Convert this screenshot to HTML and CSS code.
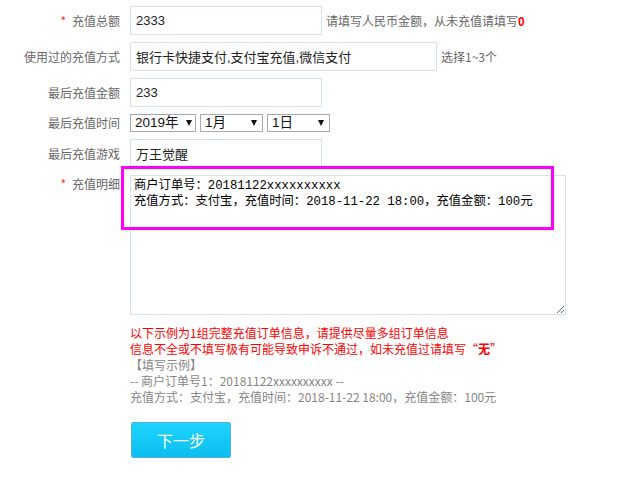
FILE: index.html
```html
<!DOCTYPE html>
<html lang="zh-CN">
<head>
<meta charset="utf-8">
<title>充值信息</title>
<link rel="stylesheet" href="styles.css">
</head>
<body>
<form class="form">
  <div class="row">
    <label class="label"><span class="req">*</span>充值总额</label>
    <input class="field field-short" type="text" value="2333">
    <span class="hint">请填写人民币金额，从未充值请填写<b class="zero">0</b></span>
  </div>
  <div class="row">
    <label class="label">使用过的充值方式</label>
    <input class="field field-long" type="text" value="银行卡快捷支付,支付宝充值,微信支付">
    <span class="hint">选择1~3个</span>
  </div>
  <div class="row">
    <label class="label">最后充值金额</label>
    <input class="field field-short" type="text" value="233">
  </div>
  <div class="row row-select">
    <label class="label">最后充值时间</label>
    <div class="selects">
      <span class="sel sel-year"><select><option>2019年</option></select></span>
      <span class="sel sel-month"><select><option>1月</option></select></span>
      <span class="sel sel-day"><select><option>1日</option></select></span>
    </div>
  </div>
  <div class="row">
    <label class="label">最后充值游戏</label>
    <input class="field field-short" type="text" value="万王觉醒">
  </div>
  <div class="row row-top">
    <label class="label label-top"><span class="req">*</span>充值明细</label>
    <div class="detail">
      <textarea class="area">商户订单号：20181122xxxxxxxxxx
充值方式：支付宝，充值时间：2018-11-22 18:00，充值金额：100元</textarea>
      <div class="notes">
        <p class="warn">以下示例为1组完整充值订单信息，请提供尽量多组订单信息</p>
        <p class="warn">信息不全或不填写极有可能导致申诉不通过，如未充值过请填写“<b>无</b>”</p>
        <p class="eg">【填写示例】</p>
        <p class="eg">-- 商户订单号1：20181122xxxxxxxxxx --</p>
        <p class="eg">充值方式：支付宝，充值时间：2018-11-22 18:00，充值金额：100元</p>
      </div>
      <button class="next" type="button">下一步</button>
    </div>
  </div>
  <div class="highlight"></div>
</form>
</body>
</html>
```

FILE: styles.css
```css
html, body {
  margin: 0;
  padding: 0;
  background: #fff;
}
body {
  font-family: "Noto Sans CJK SC", "Liberation Sans", sans-serif;
  font-size: 12px;
  color: #666;
}
.form {
  position: relative;
  display: flex;
  flex-direction: column;
  gap: 7px;
  padding-top: 6px;
}
.row {
  display: flex;
  align-items: center;
}
.row-top {
  align-items: flex-start;
}
.label {
  width: 120px;
  margin-right: 10px;
  text-align: right;
  font-size: 12px;
  line-height: 16px;
  color: #666;
  flex: none;
}
.label-top {
  padding-top: 1px;
}
.req {
  color: #f33;
  margin-right: 6px;
}
.field {
  box-sizing: border-box;
  height: 29px;
  border: 1px solid #d5e3f0;
  padding: 0 5px;
  font-family: "Liberation Sans", "Noto Sans CJK SC", sans-serif;
  font-size: 13px;
  color: #222;
  outline: none;
  margin: 0;
}
.field-short { width: 192px; }
.field-long { width: 307px; }
.hint {
  margin-left: 4px;
  color: #666;
  font-size: 12px;
}
.zero {
  color: #f00;
  font-family: "Liberation Sans", sans-serif;
  font-weight: bold;
  font-size: 12px;
}
.row-select { height: 18px; }
.selects {
  display: flex;
  gap: 4px;
}
.sel {
  position: relative;
  display: block;
}
.sel select {
  appearance: none;
  -webkit-appearance: none;
  box-sizing: border-box;
  height: 18px;
  border: 1px solid #a9a9a9;
  border-radius: 0;
  background: #fff;
  padding: 0 0 0 4px;
  margin: 0;
  font-family: "Liberation Sans", "Noto Sans CJK SC", sans-serif;
  font-size: 13.5px;
  line-height: 16px;
  color: #111;
  display: block;
}
.sel::after {
  content: "";
  position: absolute;
  right: 6px;
  top: 6px;
  border-left: 3.5px solid transparent;
  border-right: 3.5px solid transparent;
  border-top: 6px solid #111;
  pointer-events: none;
}
.sel-year select { width: 66px; }
.sel-year::after { right: 4px; }
.sel-month select, .sel-day select { width: 63px; }
.detail {
  display: flex;
  flex-direction: column;
  align-items: flex-start;
}
.area {
  box-sizing: border-box;
  width: 436px;
  height: 140px;
  border: 1px solid #d5e3f0;
  padding: 2px 3px;
  margin: 0;
  font-family: "Liberation Mono", "Noto Sans CJK SC", monospace;
  font-size: 12.3px;
  line-height: 16px;
  color: #000;
  outline: none;
  display: block;
}
.notes {
  margin-top: 10px;
}
.notes p {
  margin: 0;
  font-size: 12px;
  line-height: 16px;
}
.warn { color: #f00; }
.warn b { font-weight: bold; }
.eg { color: #858585; }
.next {
  margin: 17px 0 0 1px;
  box-sizing: border-box;
  width: 100px;
  height: 36px;
  border: 1px solid #56b2dd;
  border-radius: 2px;
  background: linear-gradient(#1dd5fe, #0bbdf1);
  color: #fff;
  font-family: "Noto Sans CJK SC", sans-serif;
  font-size: 16px;
  cursor: pointer;
  padding: 0;
}
.highlight {
  position: absolute;
  left: 121px;
  top: 166px;
  width: 433px;
  height: 64px;
  box-sizing: border-box;
  border: 3px solid #f0f;
  pointer-events: none;
}
```
